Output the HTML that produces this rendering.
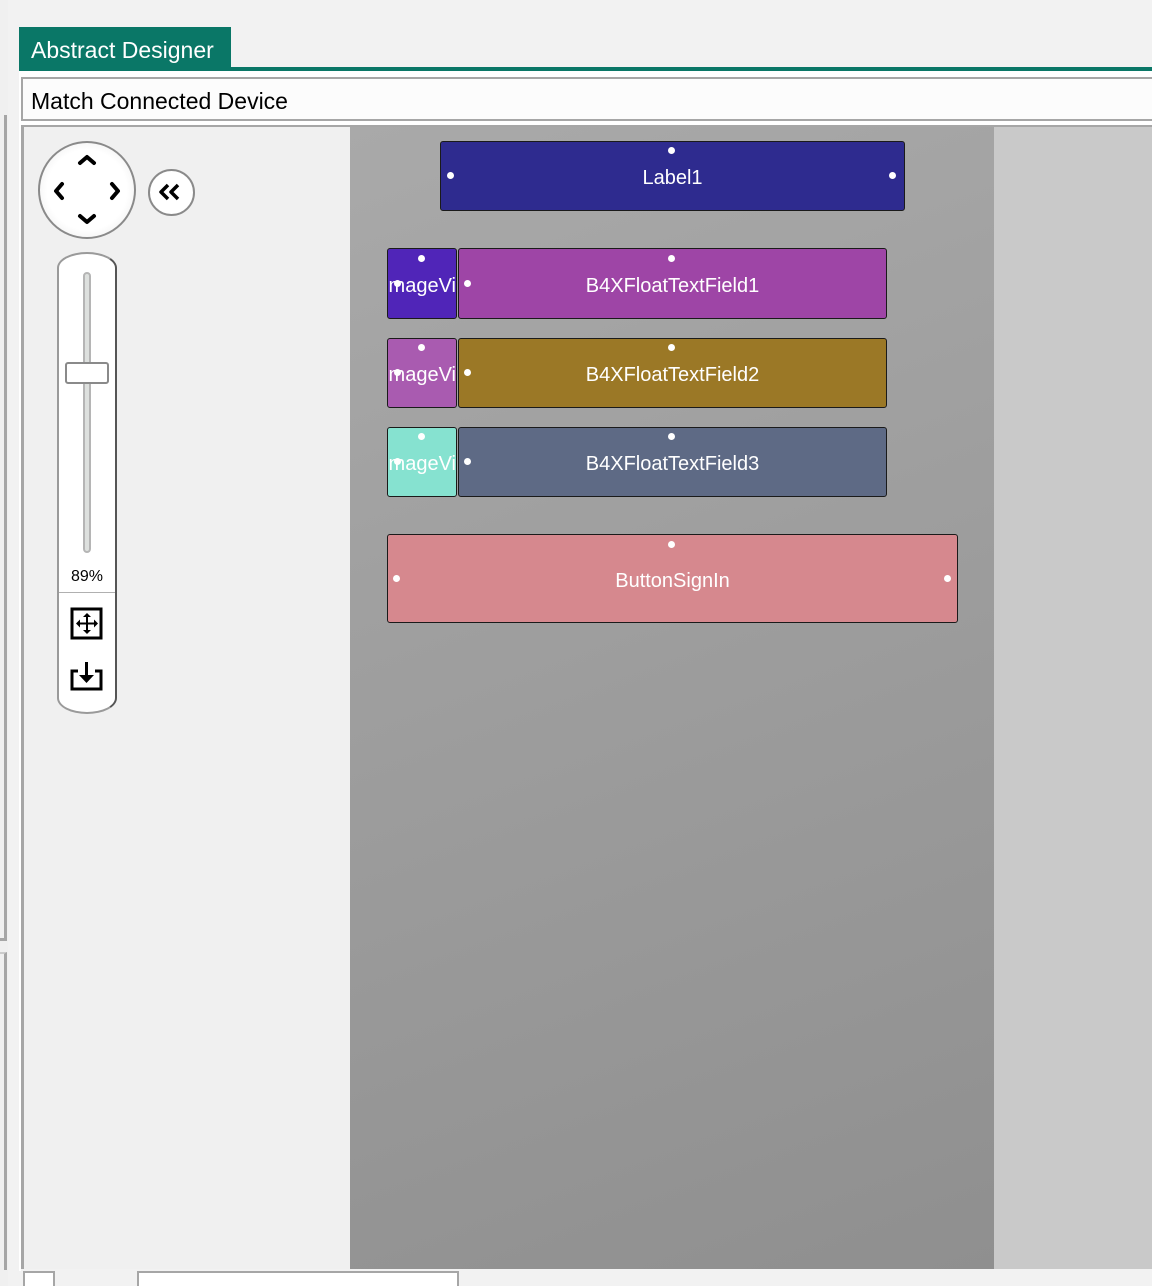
<!DOCTYPE html>
<html><head><style>
*{margin:0;padding:0;box-sizing:border-box}
body{width:1152px;height:1286px;background:#f2f2f2;position:relative;overflow:hidden;font-family:"Liberation Sans",sans-serif}
.a{position:absolute}
.v{position:absolute;border:1.5px solid #1a1a1a;border-radius:3px;color:#fff;font-size:20px;display:flex;align-items:center;justify-content:center;overflow:hidden;white-space:nowrap;padding-top:5px}
.d{position:absolute;width:7px;height:7px;border-radius:50%;background:#fff}
</style></head><body>
<div class="a" style="left:0;top:0;width:8px;height:1286px;background:#f0f0f0"></div>
<div class="a" style="left:0;top:115px;width:7px;height:826px;border-right:3px solid #a6a6a6;border-bottom:3px solid #a6a6a6"></div>
<div class="a" style="left:0;top:952px;width:7px;height:318px;border-right:3px solid #a6a6a6;border-top:2px solid #ccc"></div>
<div class="a" style="left:19px;top:27px;width:212px;height:42px;background:#0a7767;color:#fff;font-size:23px;padding:10px 0 0 12px">Abstract Designer</div>
<div class="a" style="left:19px;top:67px;width:1133px;height:4px;background:#0a7767"></div>
<div class="a" style="left:19px;top:71px;width:1133px;height:1200px;background:#fff"></div>
<div class="a" style="left:21px;top:77px;width:1131px;height:44px;background:#fcfcfc;border:2px solid #a6a6a6;border-right:none;font-size:23px;padding:9px 0 0 8px;color:#000">Match Connected Device</div>
<div class="a" style="left:21px;top:125px;width:1131px;height:1146px;background:#f0f0f0;border-left:3px solid #a6a6a6;border-top:2px solid #a6a6a6"></div>
<div class="a" style="left:350px;top:127px;width:644px;height:1142px;background:linear-gradient(160deg,#a9a9a9,#8f8f8f)"></div>
<div class="a" style="left:994px;top:127px;width:158px;height:1142px;background:#c9c9c9"></div>
<div class="a" style="left:21px;top:1269px;width:1131px;height:17px;background:#f2f2f2"></div>
<div class="a" style="left:23px;top:1271px;width:32px;height:15px;background:#fff;border:2px solid #a6a6a6;border-bottom:none"></div>
<div class="a" style="left:137px;top:1271px;width:322px;height:15px;background:#fff;border:2px solid #a6a6a6;border-bottom:none"></div>
<div class="a" style="left:38px;top:141px;width:98px;height:98px;border-radius:50%;background:radial-gradient(circle,#fff 60%,#eee 85%,#ccc);border:2px solid #8a8a8a"></div>
<svg class="a" style="left:38px;top:141px" width="98" height="98" fill="none" stroke="#000" stroke-width="4" stroke-linecap="round" stroke-linejoin="round">
<path d="M42 22l7-6 7 6"/><path d="M42 75l7 6 7-6"/><path d="M24 43l-6 7 6 7"/><path d="M74 43l6 7-6 7"/></svg>
<div class="a" style="left:148px;top:169px;width:47px;height:47px;border-radius:50%;background:#fff;border:2px solid #8a8a8a"></div>
<svg class="a" style="left:148px;top:169px" width="47" height="47" fill="none" stroke="#000" stroke-width="3.5" stroke-linejoin="round"><path d="M20 16l-7 7 7 7"/><path d="M30 16l-7 7 7 7"/></svg>
<div class="a" style="left:57px;top:252px;width:60px;height:462px;background:#fff;border:2px solid #9a9a9a;border-right-color:#555;border-radius:30px/16px"></div>
<div class="a" style="left:83px;top:272px;width:8px;height:281px;background:#dde0de;border:2px solid #b5b5b5;border-radius:4px"></div>
<div class="a" style="left:65px;top:362px;width:44px;height:22px;background:#fff;border:2px solid #8a8a8a;border-radius:3px"></div>
<div class="a" style="left:57px;top:568px;width:60px;text-align:center;font-size:16px;color:#000">89%</div>
<div class="a" style="left:59px;top:592px;width:56px;height:1px;background:#b0b0b0"></div>
<svg class="a" style="left:70px;top:607px" width="34" height="34" fill="none" stroke="#000"><rect x="2" y="2" width="29" height="29" stroke-width="3"/><path d="M17 8v17M8 16.5h17" stroke-width="2"/><path d="M17 6l-4 4h8zM17 27l-4-4h8zM6 16.5l4-4v8zM28 16.5l-4-4v8z" fill="#000" stroke="none"/></svg>
<svg class="a" style="left:70px;top:660px" width="34" height="34" fill="none" stroke="#000" stroke-width="3"><path d="M8 11H2v18h29V11h-6"/><path d="M16.5 2v17" /><path d="M9 15l7.5 8 7.5-8z" fill="#000" stroke="none"/></svg>
<div class="v" style="left:440px;top:141px;width:465px;height:70px;background:#2e2b8f">Label1</div>
<div class="d" style="left:668px;top:147px"></div><div class="d" style="left:447px;top:172px"></div><div class="d" style="left:889px;top:172px"></div>

<div class="v" style="left:387px;top:248px;width:70px;height:71px;background:#5025b8;justify-content:flex-end;padding-right:0">mageVi</div>
<div class="v" style="left:458px;top:248px;width:429px;height:71px;background:#9e45a6">B4XFloatTextField1</div>
<div class="d" style="left:418px;top:255px"></div><div class="d" style="left:668px;top:255px"></div><div class="d" style="left:394px;top:280px"></div><div class="d" style="left:464px;top:280px"></div>

<div class="v" style="left:387px;top:338px;width:70px;height:70px;background:#a95bb0;justify-content:flex-end;padding-right:0">mageVi</div>
<div class="v" style="left:458px;top:338px;width:429px;height:70px;background:#9b7826">B4XFloatTextField2</div>
<div class="d" style="left:418px;top:344px"></div><div class="d" style="left:668px;top:344px"></div><div class="d" style="left:394px;top:369px"></div><div class="d" style="left:464px;top:369px"></div>

<div class="v" style="left:387px;top:427px;width:70px;height:70px;background:#86e2d0;justify-content:flex-end;padding-right:0">mageVi</div>
<div class="v" style="left:458px;top:427px;width:429px;height:70px;background:#5e6a85">B4XFloatTextField3</div>
<div class="d" style="left:418px;top:433px"></div><div class="d" style="left:668px;top:433px"></div><div class="d" style="left:394px;top:458px"></div><div class="d" style="left:464px;top:458px"></div>

<div class="v" style="left:387px;top:534px;width:571px;height:89px;background:#d6888e">ButtonSignIn</div>
<div class="d" style="left:668px;top:541px"></div><div class="d" style="left:393px;top:575px"></div><div class="d" style="left:944px;top:575px"></div>
</body></html>
